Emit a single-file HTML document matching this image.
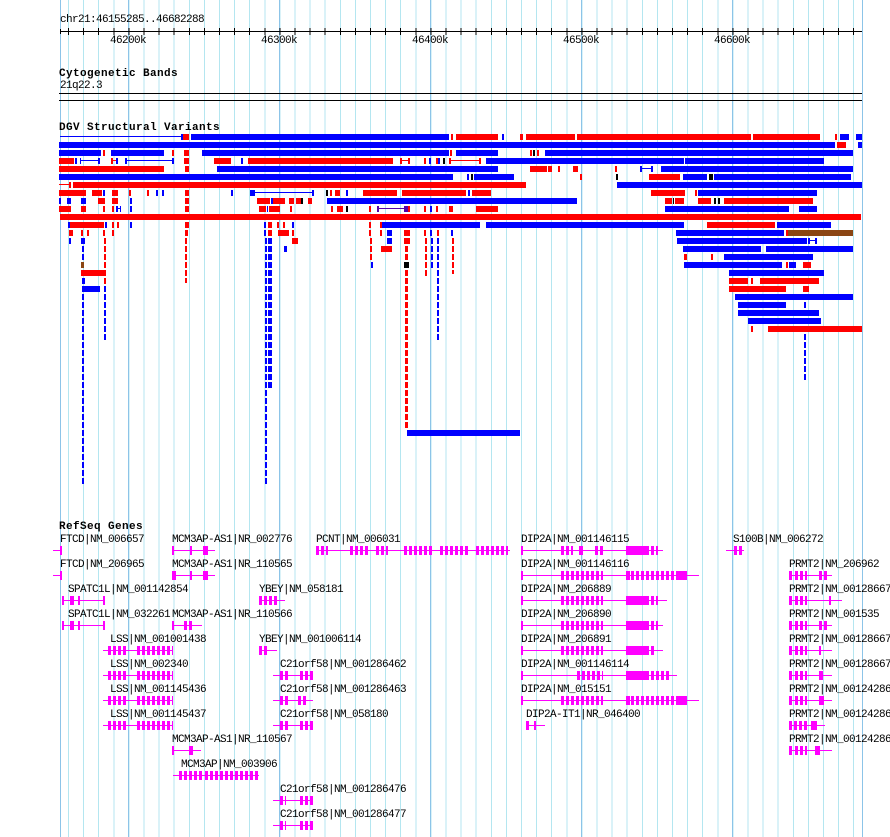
<!DOCTYPE html>
<html><head><meta charset="utf-8"><style>
*{margin:0;padding:0}
body{width:890px;height:837px;background:#fff;position:relative;overflow:hidden;font-family:"Liberation Mono",monospace;font-size:11px;letter-spacing:-0.6px;color:#000}
.grid{position:absolute;left:67.6px;top:0;width:795px;height:837px;background:repeating-linear-gradient(90deg,#b4e6f0 0 1px,transparent 1px 15.1px)}
.mj{position:absolute;top:0;height:837px;width:1px;background:#8cc4e8}
.t{position:absolute;white-space:pre;line-height:10px}
.h{font-weight:bold;letter-spacing:0.4px}
.row{position:absolute;left:0;width:890px;height:6px}
.row i{position:absolute;top:0;height:6px;display:block}
.r{background:#f00}.b{background:#00f}.k{background:#000}.n{background:#8b4513}.p{background:#50a}
.row i.lb,.row i.lr,.row i.lp{top:2px;height:1px}
.lb{background:#00f}.lr{background:#f00}.lp{background:#50a}
.d{position:absolute;width:2px}
.dr{background:repeating-linear-gradient(180deg,#f00 0 6px,transparent 6px 8px)}
.db{background:repeating-linear-gradient(180deg,#00f 0 6px,transparent 6px 8px)}
.g{position:absolute;height:9px}
.g:before{content:"";position:absolute;left:0;right:0;top:4px;height:1px;background:#f0f}
.g i{position:absolute;top:0;height:9px;background:#f0f;display:block}
.g i.s{background:repeating-linear-gradient(90deg,#f0f 0 3px,transparent 3px 5px)}
</style></head><body>
<div class="grid"></div>
<div class="mj" style="left:60px"></div><div class="mj" style="left:128px"></div><div class="mj" style="left:279px"></div><div class="mj" style="left:430px"></div><div class="mj" style="left:581px"></div><div class="mj" style="left:732px"></div><div class="mj" style="left:862px"></div>

<div class="t" style="left:60px;top:15px">chr21:46155285..46682288</div>
<div style="position:absolute;left:60px;top:31px;width:802px;height:1px;background:#000"></div>
<div style="position:absolute;left:67.6px;top:28px;width:795px;height:7px;background:repeating-linear-gradient(90deg,#000 0 1px,transparent 1px 15.1px)"></div>
<div style="position:absolute;left:60px;top:29px;width:1px;height:5px;background:#000"></div>
<div class="t" style="left:110px;top:36px">46200k</div>
<div class="t" style="left:261px;top:36px">46300k</div>
<div class="t" style="left:412px;top:36px">46400k</div>
<div class="t" style="left:563px;top:36px">46500k</div>
<div class="t" style="left:714px;top:36px">46600k</div>

<div class="t h" style="left:59px;top:69px">Cytogenetic Bands</div>
<div class="t" style="left:60px;top:81px">21q22.3</div>
<div style="position:absolute;left:59px;top:93px;width:803px;height:1px;background:#000"></div>
<div style="position:absolute;left:59px;top:100px;width:803px;height:1px;background:#000"></div>

<div class="t h" style="left:59px;top:123px">DGV Structural Variants</div>

<div class="row" style="top:134px"><i class="lb" style="left:60px;width:122px"></i><i class="b" style="left:181px;width:2px"></i><i class="r" style="left:183px;width:6px"></i><i class="b" style="left:191px;width:258px"></i><i class="r" style="left:451px;width:2px"></i><i class="r" style="left:456px;width:42px"></i><i class="b" style="left:502px;width:2px"></i><i class="r" style="left:520px;width:3px"></i><i class="r" style="left:526px;width:49px"></i><i class="r" style="left:577px;width:174px"></i><i class="r" style="left:753px;width:67px"></i><i class="r" style="left:835px;width:2px"></i><i class="b" style="left:840px;width:9px"></i><i class="b" style="left:856px;width:6px"></i></div>
<div class="row" style="top:142px"><i class="b" style="left:59px;width:776px"></i><i class="r" style="left:837px;width:9px"></i><i class="b" style="left:858px;width:4px"></i></div>
<div class="row" style="top:150px"><i class="b" style="left:59px;width:42px"></i><i class="r" style="left:103px;width:2px"></i><i class="b" style="left:111px;width:53px"></i><i class="r" style="left:172px;width:2px"></i><i class="r" style="left:184px;width:5px"></i><i class="b" style="left:202px;width:247px"></i><i class="r" style="left:450px;width:2px"></i><i class="b" style="left:456px;width:42px"></i><i class="r" style="left:530px;width:2px"></i><i class="k" style="left:533px;width:2px"></i><i class="r" style="left:537px;width:2px"></i><i class="b" style="left:545px;width:308px"></i></div>
<div class="row" style="top:158px"><i class="r" style="left:59px;width:15px"></i><i class="b" style="left:75px;width:2px"></i><i class="lb" style="left:80px;width:19px"></i><i class="b" style="left:80px;width:1px"></i><i class="b" style="left:98px;width:2px"></i><i class="r" style="left:111px;width:2px"></i><i class="lr" style="left:111px;width:7px"></i><i class="b" style="left:116px;width:2px"></i><i class="b" style="left:125px;width:2px"></i><i class="lb" style="left:125px;width:48px"></i><i class="b" style="left:172px;width:2px"></i><i class="r" style="left:184px;width:5px"></i><i class="r" style="left:214px;width:17px"></i><i class="b" style="left:241px;width:2px"></i><i class="r" style="left:248px;width:145px"></i><i class="r" style="left:400px;width:2px"></i><i class="lr" style="left:400px;width:10px"></i><i class="r" style="left:408px;width:2px"></i><i class="r" style="left:424px;width:2px"></i><i class="b" style="left:429px;width:2px"></i><i class="r" style="left:436px;width:2px"></i><i class="b" style="left:438px;width:2px"></i><i class="k" style="left:443px;width:2px"></i><i class="r" style="left:449px;width:2px"></i><i class="lr" style="left:449px;width:31px"></i><i class="r" style="left:479px;width:2px"></i><i class="b" style="left:486px;width:198px"></i><i class="b" style="left:685px;width:139px"></i></div>
<div class="row" style="top:166px"><i class="r" style="left:59px;width:105px"></i><i class="r" style="left:185px;width:4px"></i><i class="b" style="left:217px;width:281px"></i><i class="r" style="left:530px;width:17px"></i><i class="r" style="left:548px;width:4px"></i><i class="r" style="left:558px;width:2px"></i><i class="r" style="left:573px;width:5px"></i><i class="r" style="left:615px;width:2px"></i><i class="b" style="left:640px;width:2px"></i><i class="lb" style="left:640px;width:12px"></i><i class="b" style="left:651px;width:2px"></i><i class="b" style="left:661px;width:192px"></i></div>
<div class="row" style="top:174px"><i class="b" style="left:59px;width:394px"></i><i class="b" style="left:467px;width:2px"></i><i class="k" style="left:471px;width:2px"></i><i class="b" style="left:474px;width:40px"></i><i class="r" style="left:580px;width:2px"></i><i class="k" style="left:616px;width:2px"></i><i class="r" style="left:649px;width:31px"></i><i class="b" style="left:683px;width:24px"></i><i class="k" style="left:709px;width:4px"></i><i class="b" style="left:714px;width:137px"></i></div>
<div class="row" style="top:182px"><i class="lr" style="left:59px;width:11px"></i><i class="r" style="left:69px;width:2px"></i><i class="r" style="left:73px;width:453px"></i><i class="b" style="left:617px;width:245px"></i></div>
<div class="row" style="top:190px"><i class="r" style="left:59px;width:27px"></i><i class="r" style="left:92px;width:10px"></i><i class="b" style="left:103px;width:2px"></i><i class="r" style="left:112px;width:6px"></i><i class="r" style="left:129px;width:2px"></i><i class="r" style="left:147px;width:2px"></i><i class="b" style="left:156px;width:2px"></i><i class="b" style="left:162px;width:2px"></i><i class="r" style="left:185px;width:4px"></i><i class="b" style="left:231px;width:2px"></i><i class="b" style="left:250px;width:5px"></i><i class="lb" style="left:255px;width:58px"></i><i class="b" style="left:312px;width:2px"></i><i class="k" style="left:326px;width:2px"></i><i class="r" style="left:330px;width:2px"></i><i class="r" style="left:335px;width:5px"></i><i class="b" style="left:346px;width:2px"></i><i class="r" style="left:363px;width:34px"></i><i class="r" style="left:402px;width:64px"></i><i class="b" style="left:468px;width:2px"></i><i class="r" style="left:472px;width:19px"></i><i class="r" style="left:651px;width:34px"></i><i class="r" style="left:695px;width:2px"></i><i class="b" style="left:698px;width:119px"></i></div>
<div class="row" style="top:198px"><i class="b" style="left:59px;width:2px"></i><i class="b" style="left:67px;width:4px"></i><i class="b" style="left:81px;width:5px"></i><i class="r" style="left:98px;width:7px"></i><i class="r" style="left:112px;width:6px"></i><i class="b" style="left:130px;width:2px"></i><i class="r" style="left:185px;width:4px"></i><i class="r" style="left:257px;width:13px"></i><i class="b" style="left:271px;width:2px"></i><i class="r" style="left:273px;width:12px"></i><i class="r" style="left:289px;width:5px"></i><i class="r" style="left:296px;width:5px"></i><i class="k" style="left:301px;width:2px"></i><i class="r" style="left:308px;width:4px"></i><i class="b" style="left:327px;width:250px"></i><i class="r" style="left:665px;width:7px"></i><i class="k" style="left:673px;width:1px"></i><i class="r" style="left:675px;width:9px"></i><i class="r" style="left:698px;width:13px"></i><i class="k" style="left:714px;width:2px"></i><i class="k" style="left:718px;width:2px"></i><i class="r" style="left:724px;width:89px"></i></div>
<div class="row" style="top:206px"><i class="r" style="left:59px;width:12px"></i><i class="r" style="left:81px;width:5px"></i><i class="r" style="left:103px;width:2px"></i><i class="r" style="left:112px;width:2px"></i><i class="b" style="left:116px;width:2px"></i><i class="lb" style="left:116px;width:5px"></i><i class="b" style="left:120px;width:1px"></i><i class="b" style="left:130px;width:2px"></i><i class="r" style="left:185px;width:4px"></i><i class="r" style="left:259px;width:7px"></i><i class="b" style="left:267px;width:1px"></i><i class="r" style="left:269px;width:11px"></i><i class="r" style="left:290px;width:2px"></i><i class="r" style="left:331px;width:2px"></i><i class="r" style="left:337px;width:6px"></i><i class="k" style="left:346px;width:2px"></i><i class="r" style="left:369px;width:2px"></i><i class="lp" style="left:377px;width:28px"></i><i class="p" style="left:377px;width:2px"></i><i class="p" style="left:404px;width:4px"></i><i class="r" style="left:408px;width:2px"></i><i class="r" style="left:424px;width:2px"></i><i class="b" style="left:430px;width:2px"></i><i class="r" style="left:436px;width:2px"></i><i class="r" style="left:449px;width:4px"></i><i class="r" style="left:476px;width:22px"></i><i class="b" style="left:665px;width:124px"></i><i class="b" style="left:799px;width:18px"></i></div>
<div class="row" style="top:214px"><i class="r" style="left:60px;width:801px"></i></div>
<div class="row" style="top:222px"><i class="b" style="left:68px;width:2px"></i><i class="r" style="left:70px;width:34px"></i><i class="b" style="left:105px;width:2px"></i><i class="r" style="left:112px;width:2px"></i><i class="r" style="left:117px;width:2px"></i><i class="b" style="left:130px;width:2px"></i><i class="r" style="left:185px;width:4px"></i><i class="b" style="left:264px;width:2px"></i><i class="r" style="left:268px;width:4px"></i><i class="r" style="left:277px;width:2px"></i><i class="r" style="left:283px;width:2px"></i><i class="b" style="left:292px;width:2px"></i><i class="r" style="left:369px;width:2px"></i><i class="r" style="left:380px;width:2px"></i><i class="b" style="left:382px;width:98px"></i><i class="b" style="left:486px;width:198px"></i><i class="r" style="left:707px;width:68px"></i><i class="b" style="left:777px;width:54px"></i></div>
<div class="row" style="top:230px"><i class="r" style="left:69px;width:4px"></i><i class="r" style="left:81px;width:2px"></i><i class="r" style="left:87px;width:2px"></i><i class="r" style="left:103px;width:2px"></i><i class="r" style="left:112px;width:2px"></i><i class="r" style="left:185px;width:3px"></i><i class="b" style="left:264px;width:2px"></i><i class="r" style="left:268px;width:4px"></i><i class="r" style="left:278px;width:11px"></i><i class="r" style="left:292px;width:2px"></i><i class="r" style="left:369px;width:2px"></i><i class="r" style="left:380px;width:2px"></i><i class="b" style="left:387px;width:5px"></i><i class="r" style="left:404px;width:6px"></i><i class="r" style="left:424px;width:2px"></i><i class="b" style="left:430px;width:2px"></i><i class="r" style="left:437px;width:2px"></i><i class="b" style="left:451px;width:2px"></i><i class="b" style="left:676px;width:108px"></i><i class="r" style="left:786px;width:2px"></i><i class="n" style="left:788px;width:65px"></i></div>

<div class="d db" style="left:82px;top:238px;height:246px"></div>
<div class="row" style="top:238px"><i class="b" style="left:81px;width:4px"></i><i class="r" style="left:292px;width:6px"></i><i class="b" style="left:387px;width:5px"></i><i class="r" style="left:404px;width:6px"></i><i class="b" style="left:677px;width:130px"></i><i class="lb" style="left:808px;width:9px"></i><i class="b" style="left:808px;width:2px"></i><i class="b" style="left:815px;width:2px"></i></div>
<div class="d dr" style="left:104px;top:238px;height:50px"></div>
<div class="d db" style="left:104px;top:286px;height:54px"></div>
<div class="d db" style="left:69px;top:238px;height:6px"></div>
<div class="d dr" style="left:185px;top:238px;height:45px"></div>
<div class="d db" style="left:265px;top:238px;height:246px"></div>
<div class="d db" style="left:268px;top:238px;width:4px;height:150px"></div>
<div class="d dr" style="left:370px;top:238px;height:22px"></div>
<div class="d db" style="left:371px;top:262px;height:6px"></div>
<div class="d dr" style="left:405px;top:238px;width:3px;height:190px"></div>
<div class="d dr" style="left:425px;top:238px;height:38px"></div>
<div class="d db" style="left:431px;top:238px;height:30px"></div>
<div class="d db" style="left:437px;top:238px;height:102px"></div>
<div class="d dr" style="left:452px;top:238px;height:36px"></div>
<div class="d db" style="left:804px;top:334px;height:46px"></div>
<div class="row" style="top:246px"><i class="b" style="left:284px;width:3px"></i><i class="r" style="left:381px;width:11px"></i><i class="b" style="left:683px;width:78px"></i><i class="b" style="left:766px;width:87px"></i></div>
<div class="row" style="top:254px"><i class="r" style="left:684px;width:3px"></i><i class="r" style="left:711px;width:2px"></i><i class="b" style="left:724px;width:89px"></i></div>
<div class="row" style="top:262px"><i class="n" style="left:81px;width:3px"></i><i class="k" style="left:404px;width:5px"></i><i class="b" style="left:684px;width:98px"></i><i class="r" style="left:786px;width:2px"></i><i class="b" style="left:789px;width:7px"></i><i class="r" style="left:803px;width:8px"></i></div>
<div class="row" style="top:270px"><i class="r" style="left:81px;width:24px"></i><i class="b" style="left:729px;width:95px"></i></div>
<div class="row" style="top:278px"><i class="b" style="left:82px;width:3px"></i><i class="r" style="left:729px;width:19px"></i><i class="r" style="left:751px;width:2px"></i><i class="r" style="left:760px;width:59px"></i></div>
<div class="row" style="top:286px"><i class="b" style="left:82px;width:18px"></i><i class="r" style="left:729px;width:57px"></i><i class="r" style="left:803px;width:6px"></i></div>
<div class="row" style="top:294px"><i class="b" style="left:735px;width:118px"></i></div>
<div class="row" style="top:302px"><i class="b" style="left:738px;width:48px"></i><i class="b" style="left:804px;width:2px"></i></div>
<div class="row" style="top:310px"><i class="b" style="left:738px;width:81px"></i></div>
<div class="row" style="top:318px"><i class="b" style="left:748px;width:73px"></i></div>
<div class="row" style="top:326px"><i class="r" style="left:751px;width:2px"></i><i class="r" style="left:768px;width:94px"></i></div>
<div class="row" style="top:430px"><i class="b" style="left:407px;width:113px"></i></div>

<div class="t h" style="left:59px;top:522px">RefSeq Genes</div>

<div class="t" style="left:60px;top:535px">FTCD|NM_006657</div>
<div class="g" style="left:53px;top:546px;width:9px"><i style="left:7px;width:2px"></i></div>
<div class="t" style="left:172px;top:535px">MCM3AP-AS1|NR_002776</div>
<div class="g" style="left:172px;top:546px;width:43px"><i style="left:0;width:2px"></i><i style="left:18px;width:2px"></i><i style="left:31px;width:5px"></i></div>
<div class="t" style="left:316px;top:535px">PCNT|NM_006031</div>
<div class="g" style="left:316px;top:546px;width:194px"><i class="s" style="left:0;width:12px"></i><i class="s" style="left:34px;width:20px"></i><i class="s" style="left:60px;width:12px"></i><i class="s" style="left:88px;width:30px"></i><i class="s" style="left:124px;width:28px"></i><i class="s" style="left:160px;width:32px"></i></div>
<div class="t" style="left:521px;top:535px">DIP2A|NM_001146115</div>
<div class="g" style="left:521px;top:546px;width:142px"><i style="left:0;width:2px"></i><i class="s" style="left:40px;width:12px"></i><i style="left:58px;width:4px"></i><i class="s" style="left:74px;width:8px"></i><i style="left:105px;width:20px"></i><i class="s" style="left:125px;width:12px"></i></div>
<div class="t" style="left:733px;top:535px">S100B|NM_006272</div>
<div class="g" style="left:726px;top:546px;width:18px"><i class="s" style="left:8px;width:10px"></i></div>

<div class="t" style="left:60px;top:560px">FTCD|NM_206965</div>
<div class="g" style="left:53px;top:571px;width:9px"><i style="left:7px;width:2px"></i></div>
<div class="t" style="left:172px;top:560px">MCM3AP-AS1|NR_110565</div>
<div class="g" style="left:172px;top:571px;width:43px"><i style="left:0;width:4px"></i><i style="left:18px;width:2px"></i><i style="left:31px;width:5px"></i></div>
<div class="t" style="left:521px;top:560px">DIP2A|NM_001146116</div>
<div class="g" style="left:521px;top:571px;width:178px"><i style="left:0;width:2px"></i><i class="s" style="left:40px;width:42px"></i><i style="left:105px;width:4px"></i><i class="s" style="left:110px;width:55px"></i><i style="left:158px;width:8px"></i></div>
<div class="t" style="left:789px;top:560px">PRMT2|NM_206962</div>
<div class="g" style="left:789px;top:571px;width:43px"><i style="left:0;width:3px"></i><i class="s" style="left:6px;width:12px"></i><i class="s" style="left:30px;width:10px"></i></div>

<div class="t" style="left:68px;top:585px">SPATC1L|NM_001142854</div>
<div class="g" style="left:62px;top:596px;width:43px"><i style="left:0;width:2px"></i><i style="left:8px;width:4px"></i><i style="left:16px;width:2px"></i><i style="left:41px;width:2px"></i></div>
<div class="t" style="left:259px;top:585px">YBEY|NM_058181</div>
<div class="g" style="left:259px;top:596px;width:26px"><i class="s" style="left:0;width:18px"></i></div>
<div class="t" style="left:521px;top:585px">DIP2A|NM_206889</div>
<div class="g" style="left:521px;top:596px;width:146px"><i style="left:0;width:2px"></i><i class="s" style="left:40px;width:42px"></i><i style="left:105px;width:20px"></i><i class="s" style="left:125px;width:12px"></i></div>
<div class="t" style="left:789px;top:585px">PRMT2|NM_00128667</div>
<div class="g" style="left:789px;top:596px;width:53px"><i style="left:0;width:3px"></i><i class="s" style="left:6px;width:12px"></i><i style="left:40px;width:2px"></i></div>

<div class="t" style="left:68px;top:610px">SPATC1L|NM_032261</div>
<div class="g" style="left:62px;top:621px;width:43px"><i style="left:0;width:2px"></i><i style="left:8px;width:4px"></i><i style="left:16px;width:2px"></i><i style="left:41px;width:2px"></i></div>
<div class="t" style="left:172px;top:610px">MCM3AP-AS1|NR_110566</div>
<div class="g" style="left:172px;top:621px;width:30px"><i style="left:0;width:2px"></i><i class="s" style="left:12px;width:10px"></i></div>
<div class="t" style="left:521px;top:610px">DIP2A|NM_206890</div>
<div class="g" style="left:521px;top:621px;width:142px"><i style="left:0;width:2px"></i><i class="s" style="left:40px;width:42px"></i><i style="left:105px;width:20px"></i><i class="s" style="left:125px;width:12px"></i></div>
<div class="t" style="left:789px;top:610px">PRMT2|NM_001535</div>
<div class="g" style="left:789px;top:621px;width:43px"><i style="left:0;width:3px"></i><i class="s" style="left:6px;width:12px"></i><i class="s" style="left:30px;width:10px"></i></div>

<div class="t" style="left:110px;top:635px">LSS|NM_001001438</div>
<div class="g" style="left:103px;top:646px;width:70px"><i class="s" style="left:5px;width:20px"></i><i class="s" style="left:34px;width:36px"></i></div>
<div class="t" style="left:259px;top:635px">YBEY|NM_001006114</div>
<div class="g" style="left:259px;top:646px;width:18px"><i class="s" style="left:0;width:10px"></i></div>
<div class="t" style="left:521px;top:635px">DIP2A|NM_206891</div>
<div class="g" style="left:521px;top:646px;width:142px"><i style="left:0;width:2px"></i><i class="s" style="left:40px;width:42px"></i><i style="left:105px;width:20px"></i><i class="s" style="left:125px;width:8px"></i></div>
<div class="t" style="left:789px;top:635px">PRMT2|NM_00128667</div>
<div class="g" style="left:789px;top:646px;width:43px"><i style="left:0;width:3px"></i><i class="s" style="left:6px;width:12px"></i><i style="left:30px;width:2px"></i></div>

<div class="t" style="left:110px;top:660px">LSS|NM_002340</div>
<div class="g" style="left:103px;top:671px;width:70px"><i class="s" style="left:5px;width:20px"></i><i class="s" style="left:34px;width:36px"></i></div>
<div class="t" style="left:280px;top:660px">C21orf58|NM_001286462</div>
<div class="g" style="left:273px;top:671px;width:40px"><i class="s" style="left:7px;width:8px"></i><i class="s" style="left:27px;width:13px"></i></div>
<div class="t" style="left:521px;top:660px">DIP2A|NM_001146114</div>
<div class="g" style="left:521px;top:671px;width:156px"><i style="left:0;width:2px"></i><i class="s" style="left:56px;width:26px"></i><i style="left:105px;width:20px"></i><i class="s" style="left:125px;width:24px"></i></div>
<div class="t" style="left:789px;top:660px">PRMT2|NM_00128667</div>
<div class="g" style="left:789px;top:671px;width:43px"><i style="left:0;width:3px"></i><i class="s" style="left:6px;width:12px"></i><i style="left:30px;width:4px"></i></div>

<div class="t" style="left:110px;top:685px">LSS|NM_001145436</div>
<div class="g" style="left:103px;top:696px;width:70px"><i class="s" style="left:5px;width:20px"></i><i class="s" style="left:34px;width:36px"></i></div>
<div class="t" style="left:280px;top:685px">C21orf58|NM_001286463</div>
<div class="g" style="left:273px;top:696px;width:40px"><i class="s" style="left:7px;width:8px"></i><i class="s" style="left:25px;width:10px"></i></div>
<div class="t" style="left:521px;top:685px">DIP2A|NM_015151</div>
<div class="g" style="left:521px;top:696px;width:178px"><i style="left:0;width:2px"></i><i class="s" style="left:40px;width:42px"></i><i style="left:105px;width:4px"></i><i class="s" style="left:110px;width:55px"></i><i style="left:158px;width:8px"></i></div>
<div class="t" style="left:789px;top:685px">PRMT2|NM_00124286</div>
<div class="g" style="left:789px;top:696px;width:43px"><i style="left:0;width:3px"></i><i class="s" style="left:6px;width:12px"></i><i style="left:30px;width:5px"></i></div>

<div class="t" style="left:110px;top:710px">LSS|NM_001145437</div>
<div class="g" style="left:103px;top:721px;width:70px"><i class="s" style="left:5px;width:20px"></i><i class="s" style="left:34px;width:36px"></i></div>
<div class="t" style="left:280px;top:710px">C21orf58|NM_058180</div>
<div class="g" style="left:273px;top:721px;width:40px"><i class="s" style="left:7px;width:8px"></i><i class="s" style="left:27px;width:13px"></i></div>
<div class="t" style="left:526px;top:710px">DIP2A-IT1|NR_046400</div>
<div class="g" style="left:526px;top:721px;width:19px"><i style="left:0;width:3px"></i><i style="left:8px;width:2px"></i></div>
<div class="t" style="left:789px;top:710px">PRMT2|NM_00124286</div>
<div class="g" style="left:789px;top:721px;width:36px"><i class="s" style="left:0;width:18px"></i><i style="left:22px;width:6px"></i></div>

<div class="t" style="left:172px;top:735px">MCM3AP-AS1|NR_110567</div>
<div class="g" style="left:172px;top:746px;width:29px"><i style="left:0;width:2px"></i><i style="left:17px;width:4px"></i></div>
<div class="t" style="left:789px;top:735px">PRMT2|NM_00124286</div>
<div class="g" style="left:789px;top:746px;width:43px"><i style="left:0;width:3px"></i><i class="s" style="left:6px;width:12px"></i><i style="left:26px;width:5px"></i></div>

<div class="t" style="left:181px;top:760px">MCM3AP|NM_003906</div>
<div class="g" style="left:173px;top:771px;width:86px"><i class="s" style="left:6px;width:25px"></i><i class="s" style="left:32px;width:54px"></i></div>

<div class="t" style="left:280px;top:785px">C21orf58|NM_001286476</div>
<div class="g" style="left:273px;top:796px;width:40px"><i class="s" style="left:7px;width:6px"></i><i class="s" style="left:27px;width:13px"></i></div>
<div class="t" style="left:280px;top:810px">C21orf58|NM_001286477</div>
<div class="g" style="left:273px;top:821px;width:40px"><i class="s" style="left:7px;width:6px"></i><i class="s" style="left:27px;width:13px"></i></div>
</body></html>
